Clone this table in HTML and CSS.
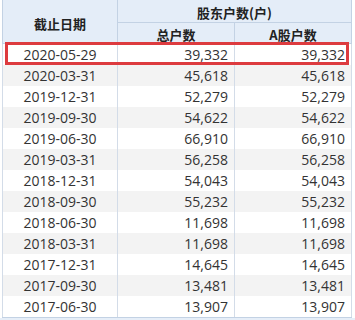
FILE: index.html
```html
<!DOCTYPE html>
<html>
<head>
<meta charset="utf-8">
<link rel="stylesheet" href="styles.css">
</head>
<body>
<div class="wrap">
  <table class="grid">
    <colgroup>
      <col class="c1"><col class="c2"><col class="c3">
    </colgroup>
    <thead>
      <tr class="h1">
        <th rowspan="2" class="hdate">截止日期</th>
        <th colspan="2">股东户数(户)</th>
      </tr>
      <tr class="h2">
        <th>总户数</th>
        <th>A股户数</th>
      </tr>
    </thead>
    <tbody>
      <tr><td class="d">2020-05-29</td><td class="n">39,332</td><td class="n">39,332</td></tr>
      <tr><td class="d">2020-03-31</td><td class="n">45,618</td><td class="n">45,618</td></tr>
      <tr><td class="d">2019-12-31</td><td class="n">52,279</td><td class="n">52,279</td></tr>
      <tr><td class="d">2019-09-30</td><td class="n">54,622</td><td class="n">54,622</td></tr>
      <tr><td class="d">2019-06-30</td><td class="n">66,910</td><td class="n">66,910</td></tr>
      <tr><td class="d">2019-03-31</td><td class="n">56,258</td><td class="n">56,258</td></tr>
      <tr><td class="d">2018-12-31</td><td class="n">54,043</td><td class="n">54,043</td></tr>
      <tr><td class="d">2018-09-30</td><td class="n">55,232</td><td class="n">55,232</td></tr>
      <tr><td class="d">2018-06-30</td><td class="n">11,698</td><td class="n">11,698</td></tr>
      <tr><td class="d">2018-03-31</td><td class="n">11,698</td><td class="n">11,698</td></tr>
      <tr><td class="d">2017-12-31</td><td class="n">14,645</td><td class="n">14,645</td></tr>
      <tr><td class="d">2017-09-30</td><td class="n">13,481</td><td class="n">13,481</td></tr>
      <tr><td class="d">2017-06-30</td><td class="n">13,907</td><td class="n">13,907</td></tr>
    </tbody>
  </table>
  <div class="foot"></div>
  <div class="highlight"></div>
</div>
</body>
</html>
```

FILE: styles.css
```css
html, body {
  margin: 0;
  padding: 0;
  background: #ffffff;
}

.wrap {
  position: relative;
  width: 355px;
  height: 320px;
  overflow: hidden;
  padding-left: 2px;
  box-sizing: border-box;
}

.grid {
  border-collapse: collapse;
  table-layout: fixed;
  width: 349px;
  font-family: "Open Sans", "Noto Sans CJK SC", sans-serif;
  font-size: 14px;
  color: #333333;
}

.c1 { width: 115px; }
.c2 { width: 117px; }
.c3 { width: 117px; }

.grid th {
  background: #e4edf8;
  border: 1px solid #c3d2e4;
  border-top: none;
  font-family: "Noto Sans CJK SC", sans-serif;
  font-weight: 700;
  font-size: 13px;
  color: #222222;
  padding: 0;
  text-align: center;
}

.h1 th {
  height: 22px;
  padding-top: 3px;
  line-height: 19px;
  box-sizing: border-box;
}

.h2 th {
  height: 20px;
  padding-top: 3px;
  line-height: 17px;
  box-sizing: border-box;
}

.h1 th.hdate {
  padding-top: 4px;
  line-height: 20px;
}

.grid td {
  height: 21px;
  padding: 0;
  line-height: 21px;
  border-left: 1px solid #d3dce8;
  border-right: 1px solid #d3dce8;
  white-space: nowrap;
}

.grid tbody tr:nth-child(even) td {
  background: #f3f3f3;
}

.grid tbody tr:last-child td {
  border-bottom: 1px solid #c3d2e4;
}

.d {
  text-align: center;
}

.n {
  text-align: right;
  padding-right: 6px !important;
}

.foot {
  height: 4px;
  background: #e6eef8;
  margin-left: -2px;
}

.highlight {
  position: absolute;
  left: 5px;
  top: 42px;
  width: 344px;
  height: 23px;
  border: 3px solid #dd3b3f;
  box-sizing: border-box;
}
```
